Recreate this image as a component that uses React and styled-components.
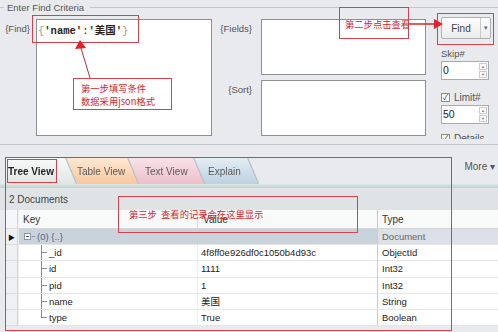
import React from 'react'
import styled, { createGlobalStyle } from "styled-components";

const GlobalStyle = createGlobalStyle`
    body{
        margin: 0;
        background: #e8eaed;
        font-family: "Liberation Sans", Arial, "Noto Sans CJK SC", sans-serif;
    }
`

const rows = [
    { key: "_id", value: "4f8ff0e926df0c1050b4d93c", type: "ObjectId" },
    { key: "id", value: "1111", type: "Int32" },
    { key: "pid", value: "1", type: "Int32" },
    { key: "name", value: "美国", type: "String" },
    { key: "type", value: "True", type: "Boolean", last: true },
]

const tabs = [
    { label: "Tree View", w: 71, pad: 3, bg: "linear-gradient(#f8f9f9, #dfe7e4)", active: true },
    { label: "Table View", w: 73, pad: 12, bg: "linear-gradient(#fde8d2, #f7c89e)" },
    { label: "Text View", w: 77, pad: 18, bg: "linear-gradient(#f8e2e8, #eebfcc)" },
    { label: "Explain", w: 65, pad: 15, bg: "linear-gradient(#e3edf4, #bcd2e2)" },
]

function App() {
  return (
    <Page>
        <GlobalStyle />
        <Criteria>
            <Legend>Enter Find Criteria</Legend>
            <CriteriaBody>
                <FieldLabel $col={1} $row={1} $pad={6}>{"{Find}"}</FieldLabel>
                <QueryBox $col={2} $row="1 / 3">
                    <Query>
                        <span className="brace">{"{"}</span>
                        <b>'name'</b>:<b>'美国'</b>
                        <span className="brace">{"}"}</span>
                    </Query>
                </QueryBox>
                <FieldLabel $col={3} $row={1} $pad={9}>{"{Fields}"}</FieldLabel>
                <QueryBox $col={4} $row={1} />
                <FieldLabel $col={3} $row={2} $pad={9}>{"{Sort}"}</FieldLabel>
                <QueryBox $col={4} $row={2} />
                <Options>
                    <FindButton>
                        <div className="main">Find</div>
                        <div className="drop">▾</div>
                    </FindButton>
                    <OptionLabel>Skip#</OptionLabel>
                    <SpinBox>
                        <div className="value">0</div>
                        <div className="spin"><span>▲</span><span>▼</span></div>
                    </SpinBox>
                    <CheckRow $top={12}>
                        <CheckBox>✓</CheckBox>Limit#
                    </CheckRow>
                    <SpinBox>
                        <div className="value">50</div>
                        <div className="spin"><span>▲</span><span>▼</span></div>
                    </SpinBox>
                    <CheckRow $top={9}>
                        <CheckBox>✓</CheckBox>Details
                    </CheckRow>
                </Options>
            </CriteriaBody>
        </Criteria>

        <Results>
            <TabStrip>
                {tabs.map((t, i) => (
                    <TabEdge key={t.label} $z={10 - i}>
                        <Tab $w={t.w} $pad={t.pad} $bg={t.bg} $active={t.active}>
                            {t.label}
                        </Tab>
                    </TabEdge>
                ))}
                <More>More ▾</More>
            </TabStrip>
            <TabRule />
            <DocBar>2 Documents</DocBar>
            <Table>
                <Row $head>
                    <Gutter $head />
                    <Cell $head $pad={4}>Key</Cell>
                    <Cell $head $pad={5} $line="#d9dcdf">Value</Cell>
                    <Cell $head $pad={4} $line="#c9ccd0">Type</Cell>
                </Row>
                <Row>
                    <Gutter>▶</Gutter>
                    <Cell $pad={5} $bg="#c9d3dc">
                        <ExpandBox />
                        <Dots />
                        <span className="doc">(0) {"{..}"}</span>
                    </Cell>
                    <Cell $bg="#c9d3dc" $line="#c9d3dc" />
                    <Cell $pad={4} $bg="#dbe1e7" $line="#c9ccd0" className="muted">Document</Cell>
                </Row>
                {rows.map((r) => (
                    <Row key={r.key}>
                        <Gutter />
                        <Cell $pad={22}>
                            <Connector $last={r.last} />
                            {r.key}
                        </Cell>
                        <Cell $pad={3}>{r.value}</Cell>
                        <Cell $pad={4} $line="#c9ccd0">{r.type}</Cell>
                    </Row>
                ))}
            </Table>
        </Results>

        <Note $x={32} $y={15} $w={107} $h={28} />
        <Note $x={73} $y={78} $w={99} $h={32} $padX={7} $padY={3}>
            第一步填写条件<br />数据采用json格式
        </Note>
        <Note $x={339} $y={7} $w={70} $h={32} $padX={5} $padY={10}>第二步点击查看</Note>
        <Note $x={437} $y={13} $w={57} $h={32} />
        <Note $x={5} $y={157} $w={447} $h={174} />
        <Note $x={7} $y={159} $w={50} $h={24} />
        <Note $x={118} $y={196} $w={240} $h={37} $padX={10} $padY={11}>
            第三步&nbsp;&nbsp;查看的记录会在这里显示
        </Note>

        <Arrows width="498" height="332" viewBox="0 0 498 332">
            <line x1="90" y1="78" x2="81" y2="48" stroke="#b0303a" strokeWidth="1" />
            <polygon points="80,40 75,49 86,48" fill="#e0202a" />
            <line x1="409" y1="24" x2="436" y2="24" stroke="#d42a2a" strokeWidth="1.5" />
            <polygon points="443,24 434,19 434,29" fill="#e0202a" />
        </Arrows>
    </Page>
  )
}

const Page = styled.div`
    position: relative;
    width: 498px;
    height: 332px;
    overflow: hidden;
    background: #e8eaed;
    color: #333;
    font-size: 9.5px;
    display: flex;
    flex-direction: column;
`

const Criteria = styled.section`
    height: 145px;
    flex: none;
    box-sizing: border-box;
    border-bottom: 1px solid #c3c6ca;
    display: flex;
    flex-direction: column;
`

const Legend = styled.div`
    display: flex;
    align-items: center;
    height: 14px;
    color: #555;
    &::before{
        content: "";
        width: 4px;
        height: 1px;
        background: #c3c6ca;
        margin-right: 3px;
    }
    &::after{
        content: "";
        flex: 1;
        height: 1px;
        background: #c3c6ca;
        margin-left: 6px;
    }
`

const CriteriaBody = styled.div`
    display: grid;
    grid-template-columns: 36px 176px 49px 165px 1fr;
    grid-template-rows: 56px 56px;
    row-gap: 5px;
    margin-top: 5px;
`

const FieldLabel = styled.div`
    grid-column: ${p => p.$col};
    grid-row: ${p => p.$row};
    text-align: right;
    padding-right: ${p => p.$pad}px;
    padding-top: 4px;
    color: #555;
`

const QueryBox = styled.div`
    grid-column: ${p => p.$col};
    grid-row: ${p => p.$row};
    background: #fff;
    border: 1px solid #8e9093;
    padding: 2px 1px;
`

const Query = styled.div`
    font-family: "Liberation Mono", "Noto Sans CJK SC", monospace;
    font-size: 10.5px;
    white-space: nowrap;
    color: #2b1e12;
    .brace{
        color: #9a9a9a;
    }
`

const Options = styled.div`
    grid-column: 5;
    grid-row: 1 / 3;
    padding-left: 15px;
    margin-top: -2px;
    height: 122px;
    overflow: hidden;
    display: flex;
    flex-direction: column;
`

const FindButton = styled.div`
    display: flex;
    flex: none;
    width: 50px;
    height: 22px;
    box-sizing: border-box;
    border: 1px solid #aeb2b6;
    border-radius: 2px;
    background: linear-gradient(#fdfdfd, #eaecee);
    font-size: 10px;
    .main{
        flex: 1;
        display: flex;
        align-items: center;
        justify-content: center;
        color: #444;
    }
    .drop{
        width: 9px;
        border-left: 1px solid #c7cacd;
        display: flex;
        align-items: center;
        justify-content: center;
        font-size: 7px;
        color: #666;
    }
`

const OptionLabel = styled.div`
    margin-top: 9px;
    color: #555;
`

const SpinBox = styled.div`
    display: flex;
    flex: none;
    width: 48px;
    height: 19px;
    margin-top: 2px;
    box-sizing: border-box;
    background: #fff;
    border: 1px solid #a8acb0;
    .value{
        flex: 1;
        padding-left: 1px;
        font-size: 10.5px;
        line-height: 17px;
        color: #222;
    }
    .spin{
        width: 8px;
        margin: 1px;
        display: flex;
        flex-direction: column;
        gap: 1px;
    }
    .spin span{
        flex: 1;
        border: 1px solid #c9cbce;
        font-size: 4px;
        color: #777;
        display: flex;
        align-items: center;
        justify-content: center;
    }
`

const CheckRow = styled.div`
    display: flex;
    flex: none;
    align-items: center;
    gap: 4px;
    margin-top: ${p => p.$top}px;
    color: #555;
    font-size: 10px;
`

const CheckBox = styled.span`
    width: 9px;
    height: 9px;
    box-sizing: border-box;
    border: 1px solid #8a8d90;
    background: #fff;
    font-size: 8px;
    line-height: 7px;
    text-align: center;
    color: #333;
`

const Results = styled.section`
    flex: 1;
    min-height: 0;
    display: flex;
    flex-direction: column;
`

const TabStrip = styled.div`
    height: 39px;
    flex: none;
    display: flex;
    align-items: flex-end;
    padding-left: 5px;
`

const TabEdge = styled.div`
    position: relative;
    z-index: ${p => p.$z};
    margin-right: -11px;
    filter: drop-shadow(1px 0 0 #b7c0c4) drop-shadow(0 -1px 0 #c3cacd);
`

const Tab = styled.div`
    width: ${p => p.$w}px;
    height: 26px;
    box-sizing: border-box;
    padding-left: ${p => p.$pad}px;
    clip-path: polygon(0 0, calc(100% - 11px) 0, 100% 100%, 0 100%);
    background: ${p => p.$bg};
    display: flex;
    align-items: center;
    font-size: 10px;
    font-weight: ${p => p.$active ? 700 : 400};
    color: ${p => p.$active ? "#1f1f1f" : "#5a5a5a"};
`

const More = styled.div`
    margin-left: auto;
    align-self: flex-start;
    margin-top: 16px;
    margin-right: 3px;
    color: #555;
    font-size: 10px;
`

const TabRule = styled.div`
    height: 4px;
    flex: none;
    background: linear-gradient(#dde6e3, #c2d1cd);
`

const DocBar = styled.div`
    height: 22px;
    flex: none;
    display: flex;
    align-items: center;
    padding-left: 9px;
    background: #dfe3e6;
    color: #444;
    font-size: 10px;
`

const Table = styled.div`
    margin-left: 6px;
    display: flex;
    flex-direction: column;
    background: #fff;
`

const Row = styled.div`
    display: grid;
    grid-template-columns: 12px 179px 180px 1fr;
    height: ${p => p.$head ? "19px" : "16.2px"};
    flex: none;
`

const Gutter = styled.div`
    background: ${p => p.$head ? "#f5f6f7" : "#eef0f2"};
    border-right: 1px solid #d3d6d9;
    border-bottom: 1px solid #dcdfe2;
    display: flex;
    align-items: center;
    justify-content: center;
    font-size: 7px;
    color: #111;
`

const Cell = styled.div`
    display: flex;
    align-items: center;
    box-sizing: border-box;
    padding-left: ${p => p.$pad ?? 3}px;
    border-left: 1px solid ${p => p.$line || "#eceef0"};
    border-bottom: 1px solid ${p => p.$head ? "#d3d6d9" : "#e4e6e8"};
    background: ${p => p.$bg || (p.$head ? "#f8f9f9" : "#fff")};
    white-space: nowrap;
    overflow: hidden;
    color: ${p => p.$head ? "#333" : "#222"};
    font-size: ${p => p.$head ? "10px" : "9.5px"};
    &.muted{
        color: #666;
    }
    .doc{
        color: #55657a;
        margin-left: 2px;
    }
`

const ExpandBox = styled.span`
    width: 7px;
    height: 7px;
    box-sizing: border-box;
    border: 1px solid #8f969d;
    background: linear-gradient(#55606b, #55606b) center / 3px 1px no-repeat, #fff;
`

const Dots = styled.span`
    width: 3px;
    height: 1px;
    margin-left: 1px;
    background: #8f969d;
`

const Connector = styled.span`
    align-self: stretch;
    width: 6px;
    margin-right: 2px;
    flex: none;
    background:
        linear-gradient(#8a8a8a, #8a8a8a) left top / 1px ${p => p.$last ? "50%" : "100%"} no-repeat,
        linear-gradient(#8a8a8a, #8a8a8a) left center / 6px 1px no-repeat;
`

const Note = styled.div`
    position: absolute;
    left: ${p => p.$x}px;
    top: ${p => p.$y}px;
    width: ${p => p.$w}px;
    height: ${p => p.$h}px;
    box-sizing: border-box;
    border: 1.5px solid #d8414b;
    padding: ${p => p.$padY || 0}px 0 0 ${p => p.$padX || 0}px;
    color: #d3262e;
    font-family: "Noto Sans CJK SC", "Liberation Sans", sans-serif;
    font-size: 9.3px;
    line-height: 13px;
    white-space: nowrap;
    pointer-events: none;
    z-index: 20;
`

const Arrows = styled.svg`
    position: absolute;
    left: 0;
    top: 0;
    pointer-events: none;
    z-index: 21;
`

export default App
